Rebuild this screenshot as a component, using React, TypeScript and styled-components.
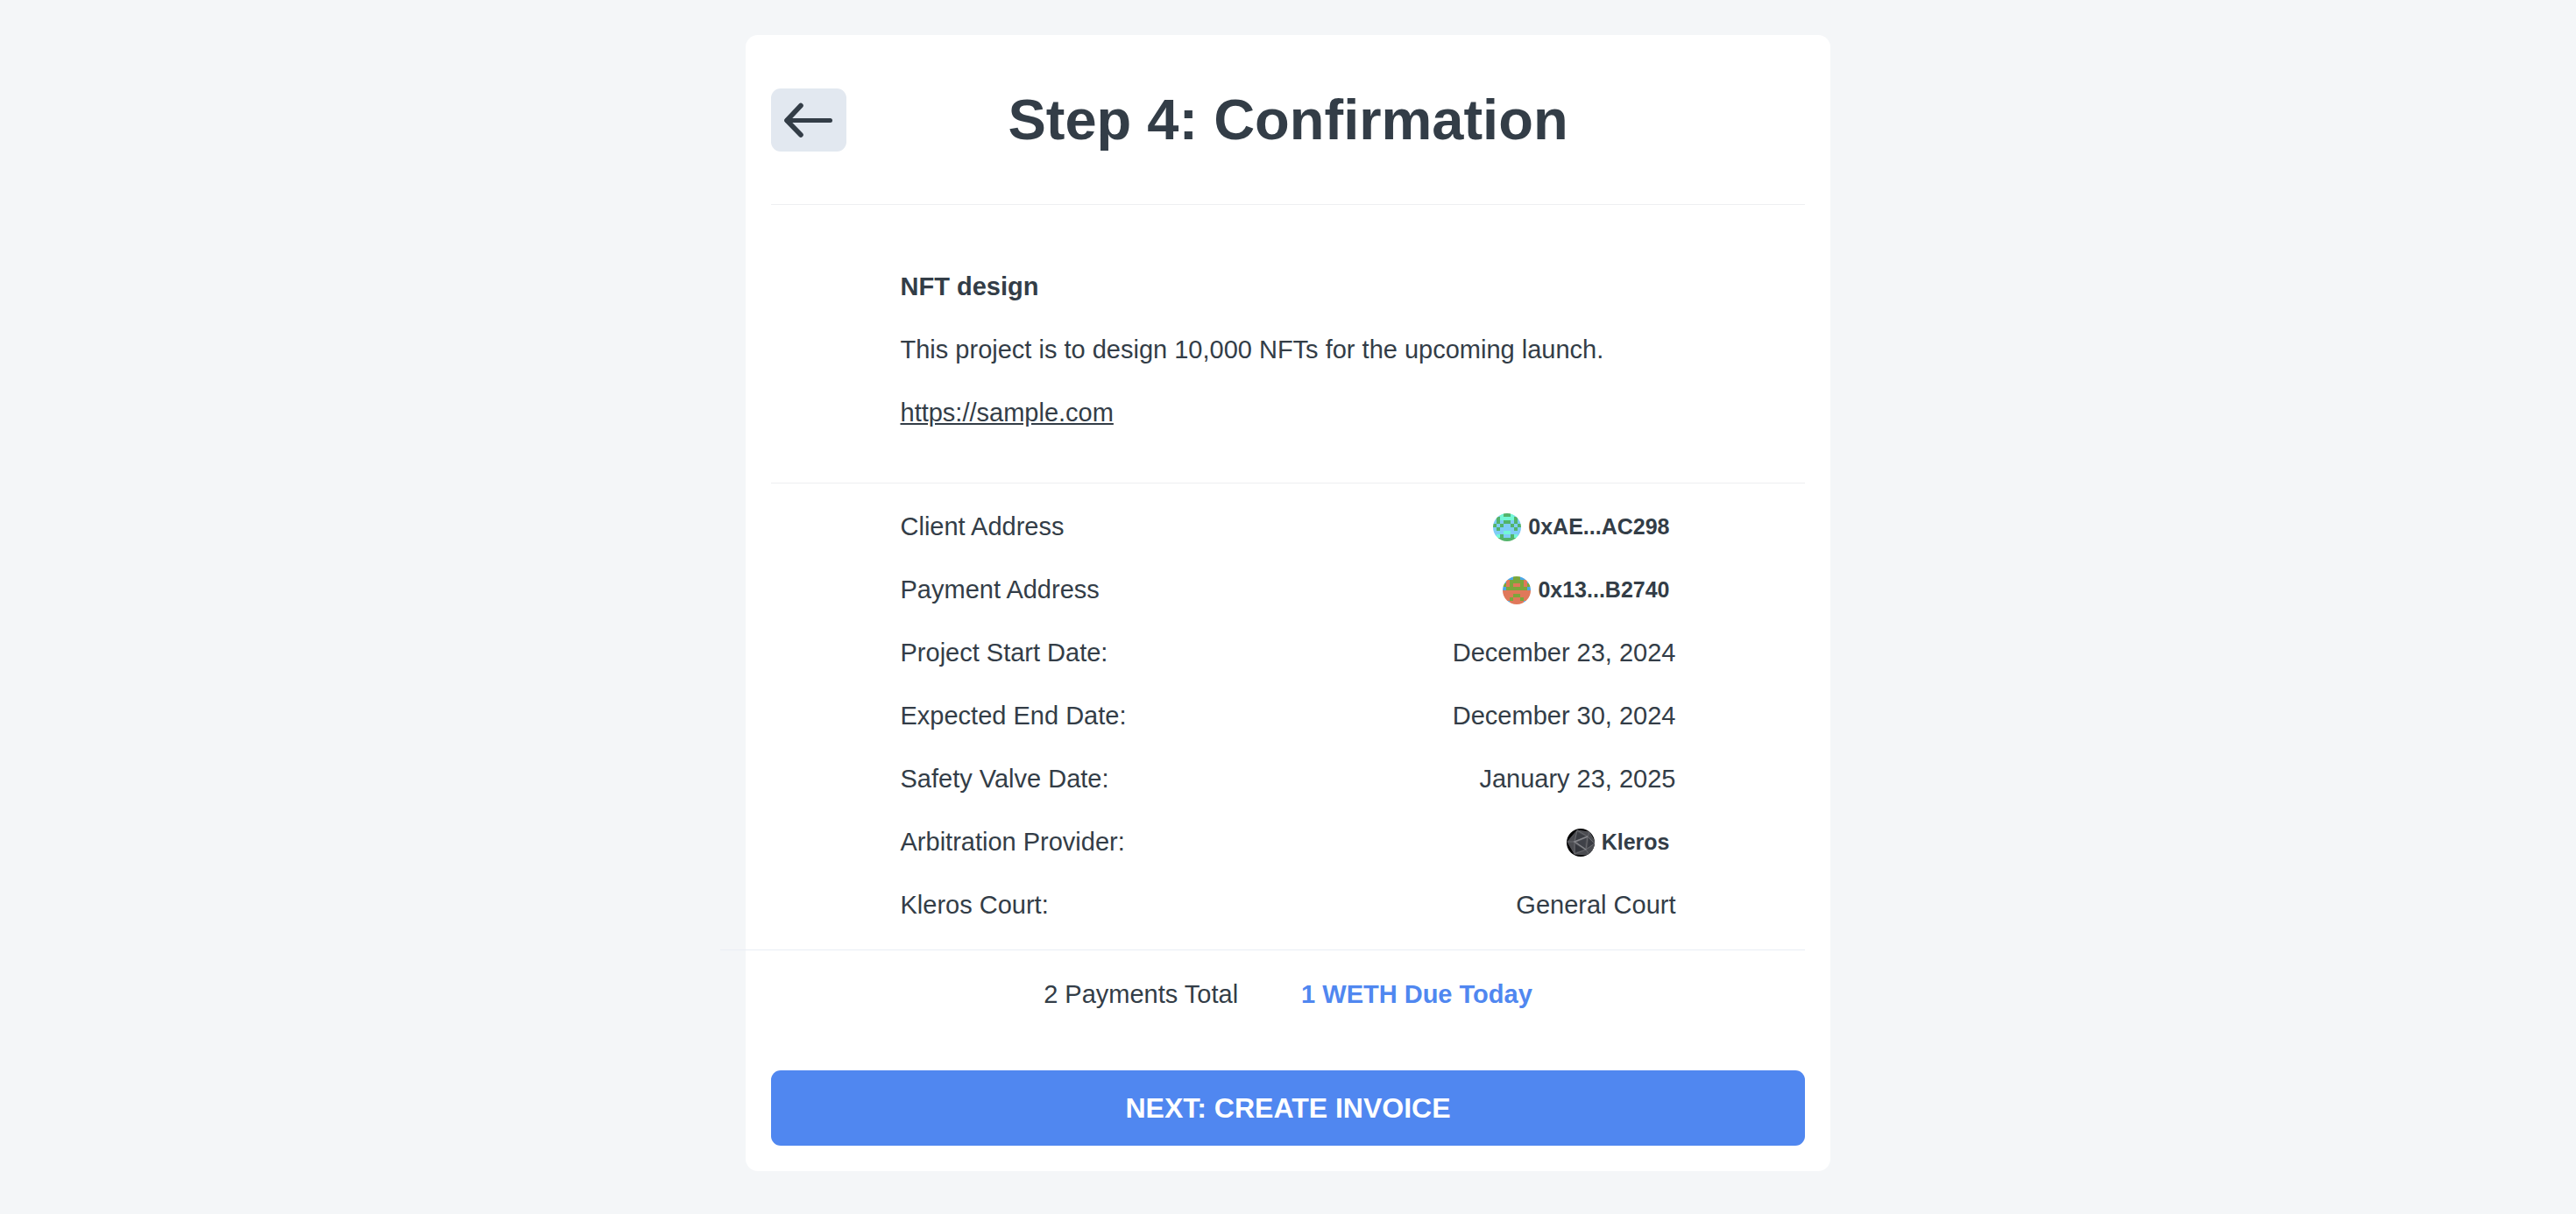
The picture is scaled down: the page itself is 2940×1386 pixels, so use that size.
import React from "react";
import styled, { createGlobalStyle } from "styled-components";

const color = {
  page: "#f4f6f8",
  card: "#ffffff",
  text: "#333d47",
  blue: "#5087f0",
  softButton: "#e2e8f0",
  line: "#eeeff1",
  coolLine: "#e9eef5",
};

const GlobalStyle = createGlobalStyle`
  *, *::before, *::after { box-sizing: border-box; }
  body {
    margin: 0;
    min-height: 100vh;
    background: ${color.page};
    color: ${color.text};
    font-family: "Liberation Sans", Arial, Helvetica, sans-serif;
    font-size: 29px;
    line-height: 43px;
  }
  h1, h2, p, dl, dd { margin: 0; }
`;

const Page = styled.main`
  display: flex;
  justify-content: center;
  padding: 40px 29px;
`;

const Card = styled.section`
  width: 100%;
  max-width: 1238px;
  padding: 29px;
  border-radius: 14px;
  background: ${color.card};
`;

const Header = styled.header`
  display: grid;
  grid-template-columns: 86px 1fr 86px;
  align-items: center;
  padding: 28px 0 56px;
`;

const Title = styled.h1`
  font-size: 65px;
  line-height: 80px;
  font-weight: 700;
  text-align: center;
`;

const BackButton = styled.button`
  display: flex;
  align-items: center;
  justify-content: center;
  height: 72px;
  padding: 0;
  border: 0;
  border-radius: 11px;
  background: ${color.softButton};
  color: inherit;
  cursor: pointer;
`;

const Divider = styled.hr<{ $wide?: boolean }>`
  height: 1px;
  margin: 0 0 0 ${(p) => (p.$wide ? "-58px" : "0")};
  border: 0;
  background: ${(p) => (p.$wide ? color.coolLine : color.line)};
`;

const Summary = styled.div`
  display: flex;
  flex-direction: column;
  align-items: flex-start;
  gap: 29px;
  width: 75%;
  margin: 0 auto;
  padding: 72px 0 58px;
`;

const ProjectName = styled.h2`
  font-size: inherit;
  line-height: inherit;
  font-weight: 700;
`;

const ProjectLink = styled.a`
  color: inherit;
  text-decoration: underline;
`;

const Details = styled.dl`
  display: flex;
  flex-direction: column;
  gap: 29px;
  width: 75%;
  margin: 0 auto;
  padding: 28px 0 29px;
`;

const DetailRow = styled.div`
  display: flex;
  justify-content: space-between;
  align-items: center;
`;

const DetailValue = styled.dd`
  text-align: right;
`;

const Account = styled.span`
  display: flex;
  align-items: center;
  gap: 8px;
  padding-right: 7px;
  font-size: 25px;
  font-weight: 700;
`;

const Totals = styled.div`
  display: flex;
  justify-content: center;
  gap: 72px;
  padding: 29px 0 65px;
`;

const DueToday = styled.p`
  color: ${color.blue};
  font-weight: 700;
`;

const NextButton = styled.button`
  display: block;
  width: 100%;
  height: 86px;
  border: 0;
  border-radius: 11px;
  background: ${color.blue};
  color: #ffffff;
  font: inherit;
  font-size: 32px;
  font-weight: 700;
  text-transform: uppercase;
  cursor: pointer;
`;

const Avatar = styled.svg`
  display: block;
  width: 32px;
  height: 32px;
  border-radius: 50%;
`;

type BlockieProps = { rows: string[]; palette: Record<string, string> };

function Blockie({ rows, palette }: BlockieProps) {
  return (
    <Avatar viewBox="0 0 8 8" shapeRendering="crispEdges" aria-hidden="true">
      {rows.flatMap((row, y) =>
        (row + [...row].reverse().join(""))
          .split("")
          .map((c, x) => (
            <rect key={`${x}-${y}`} x={x} y={y} width="1" height="1" fill={palette[c]} />
          ))
      )}
    </Avatar>
  );
}

function KlerosLogo() {
  return (
    <Avatar viewBox="0 0 32 32" aria-hidden="true">
      <rect width="32" height="32" fill="#050506" />
      <path d="M12 2 L26 4 L33 17 L26 30 L9 29 L1 15 Z" fill="#4b4c51" />
      <path d="M12 4 L22 9 L10 14 Z" fill="#3a3c42" />
      <path d="M10 18 L20 24 L10 27 Z" fill="#34363c" />
      <path d="M22 11 L21 22 L12 16 Z" fill="#3f4148" />
      <path d="M25 11 L31 17 L24 22 Z" fill="#393b42" />
      <g fill="none" stroke="#68696e" strokeWidth="1">
        <path d="M12 2 L26 4 L33 17 L26 30 L9 29 L1 15 Z" stroke="#55565b" />
        <path d="M12 2 L9 15 L9 29 M1 15 L9 15 M12 2 L24 9 L26 4 M24 9 L32 17 L22 24 L26 30 M22 24 L9 29 M24 9 L22 24" />
        <path d="M24 9 L9 15 L22 24" stroke="#85868b" strokeWidth="1.5" />
      </g>
    </Avatar>
  );
}

const clientRows = ["bbmg", "bgmm", "bgbg", "gbgb", "bgbb", "bbbm", "bmgb", "bggg"];
const clientPalette = { g: "#52b46a", m: "#73f7d6", b: "#7eccf6" };
const payeeRows = ["bbbg", "bogg", "gogo", "bggg", "oooo", "ooog", "oogo", "bboo"];
const payeePalette = { g: "#7ba63c", o: "#e0785a", b: "#4aa8e8" };

const details: { label: string; value: React.ReactNode }[] = [
  {
    label: "Client Address",
    value: (
      <Account>
        <Blockie rows={clientRows} palette={clientPalette} />
        0xAE...AC298
      </Account>
    ),
  },
  {
    label: "Payment Address",
    value: (
      <Account>
        <Blockie rows={payeeRows} palette={payeePalette} />
        0x13...B2740
      </Account>
    ),
  },
  { label: "Project Start Date:", value: "December 23, 2024" },
  { label: "Expected End Date:", value: "December 30, 2024" },
  { label: "Safety Valve Date:", value: "January 23, 2025" },
  {
    label: "Arbitration Provider:",
    value: (
      <Account>
        <KlerosLogo />
        Kleros
      </Account>
    ),
  },
  { label: "Kleros Court:", value: "General Court" },
];

export default function App() {
  return (
    <>
      <GlobalStyle />
      <Page>
        <Card>
          <Header>
            <BackButton type="button" aria-label="Back">
              <svg width="58" height="40" viewBox="0 0 58 40" fill="none" stroke="currentColor" strokeLinecap="round" strokeLinejoin="round" aria-hidden="true">
                <path d="M20 3.5 L4 20.5 L20 37" strokeWidth="5.6" />
                <path d="M4 20.5 H53.5" strokeWidth="5" />
              </svg>
            </BackButton>
            <Title>Step 4: Confirmation</Title>
          </Header>
          <Divider />
          <Summary>
            <ProjectName>NFT design</ProjectName>
            <p>This project is to design 10,000 NFTs for the upcoming launch.</p>
            <ProjectLink href="https://sample.com">https://sample.com</ProjectLink>
          </Summary>
          <Divider />
          <Details>
            {details.map((d) => (
              <DetailRow key={d.label}>
                <dt>{d.label}</dt>
                <DetailValue>{d.value}</DetailValue>
              </DetailRow>
            ))}
          </Details>
          <Divider $wide />
          <Totals>
            <p>2 Payments Total</p>
            <DueToday>1 WETH Due Today</DueToday>
          </Totals>
          <NextButton type="button">Next: Create Invoice</NextButton>
        </Card>
      </Page>
    </>
  );
}
